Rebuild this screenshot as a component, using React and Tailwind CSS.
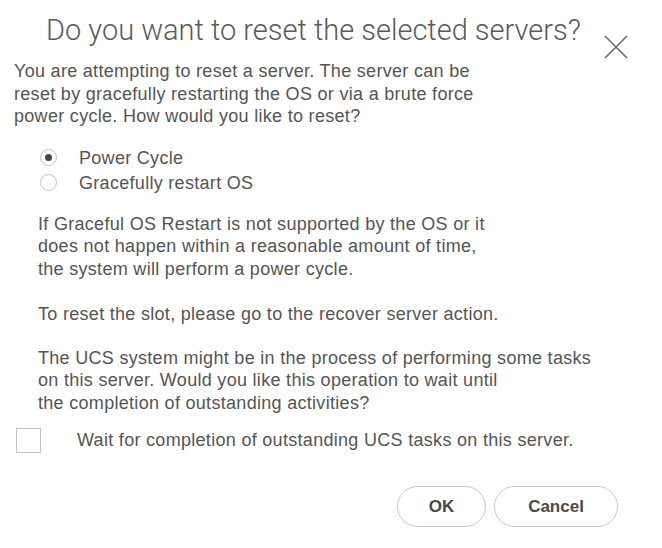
import React from "react";

export default function App() {
  return (
    <div className="w-[662px] h-[548px] bg-white text-[#555555] overflow-hidden relative tracking-[0.3px]" style={{ fontFamily: '"Liberation Sans", Arial, sans-serif' }}>
      <div className="flex items-start">
        <h1 className="pl-[46px] pt-[12px] text-[29px] leading-[36px] text-[#5a5a5a] font-light tracking-normal" style={{ fontFamily: 'Roboto, "Liberation Sans", sans-serif' }}>
          Do you want to reset the selected servers?
        </h1>
        <button className="ml-[22px] mt-[34px] w-[26px] h-[26px] flex items-center justify-center" aria-label="Close">
          <svg width="26" height="26" viewBox="0 0 26 26" fill="none" stroke="#6a6a6a" strokeWidth="1.6">
            <path d="M2 2 L24 24 M24 2 L2 24" />
          </svg>
        </button>
      </div>

      <p className="pl-[14px] text-[18px] leading-[22.5px]">
        You are attempting to reset a server. The server can be<br />
        reset by gracefully restarting the OS or via a brute force<br />
        power cycle. How would you like to reset?
      </p>

      <div className="pl-[40px] mt-[21px] flex flex-col gap-[7px] text-[18px]">
        <label className="flex items-center">
          <span className="w-[17px] h-[17px] rounded-full border border-[#c0c0c0] flex items-center justify-center">
            <span className="w-[7px] h-[7px] rounded-full bg-[#444]" />
          </span>
          <span className="ml-[22px] leading-[18px]">Power Cycle</span>
        </label>
        <label className="flex items-center">
          <span className="w-[17px] h-[17px] rounded-full border border-[#c0c0c0]" />
          <span className="ml-[22px] leading-[18px]">Gracefully restart OS</span>
        </label>
      </div>

      <p className="pl-[38px] mt-[21px] text-[18px] leading-[22.5px]">
        If Graceful OS Restart is not supported by the OS or it<br />
        does not happen within a reasonable amount of time,<br />
        the system will perform a power cycle.
      </p>

      <p className="pl-[38px] mt-[23px] text-[18px] leading-[22.5px]">
        To reset the slot, please go to the recover server action.
      </p>

      <p className="pl-[38px] mt-[21px] text-[18px] leading-[22.5px]">
        The UCS system might be in the process of performing some tasks<br />
        on this server. Would you like this operation to wait until<br />
        the completion of outstanding activities?
      </p>

      <label className="pl-[16px] mt-[13px] flex items-center text-[18px]">
        <span className="w-[25px] h-[25px] border border-[#c4c4c4]" />
        <span className="ml-[36px]">Wait for completion of outstanding UCS tasks on this server.</span>
      </label>

      <div className="mt-[32px] flex justify-end gap-[8px] pr-[44px]">
        <button className="w-[89px] h-[41px] rounded-full border border-[#c8c8c8] text-[17px] font-bold text-[#4a4a4a] tracking-normal">OK</button>
        <button className="w-[124px] h-[41px] rounded-full border border-[#c8c8c8] text-[17px] font-bold text-[#4a4a4a] tracking-normal">Cancel</button>
      </div>
    </div>
  );
}
